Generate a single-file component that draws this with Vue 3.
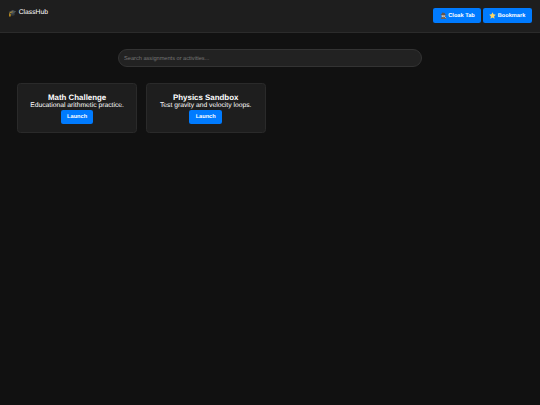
<template>
  <div class="hub">
    <header class="hub__header">
      <div class="hub__brand">
        <svg class="hub__brand-icon" viewBox="0 0 16 16" aria-hidden="true">
          <path d="M4 7v5c2 2 7 2 9 0V7z" fill="#343b3e" />
          <path d="M1 6 9 2l7 3-7 5z" fill="#4b5357" />
          <path d="M9 5.5 3 7.5V14" fill="none" stroke="#c79a28" stroke-width="1.5" />
          <path d="M2 10h3v5H1.5z" fill="#b88a20" />
        </svg>
        <span>ClassHub</span>
      </div>
      <div class="hub__actions">
        <button class="btn" type="button">
          <svg class="btn__icon" viewBox="0 0 16 16" aria-hidden="true">
            <path d="M2 16c0-4 3-5 6-5s6 1 6 5z" fill="#68615c" />
            <circle cx="8" cy="8" r="4" fill="#e5b58b" />
            <path d="M1 6c2-1 3-1 4-5l6 1c0 3 2 4 4 5-4 1-10 1-14-1z" fill="#65554c" />
            <path d="m10 10 4 4" stroke="#d8d2c7" stroke-width="1.5" />
            <circle cx="6" cy="9.5" r="2.2" fill="#d5e3e8" stroke="#77706b" />
          </svg>
          <span>Cloak Tab</span>
        </button>
        <button class="btn" type="button">
          <svg class="btn__icon" viewBox="0 0 16 16" aria-hidden="true">
            <path d="m8 .5 2.3 4.9 5.3.7-3.9 3.7 1 5.4L8 12.6l-4.7 2.6 1-5.4L.4 6.1l5.3-.7z" fill="#fdd663" />
          </svg>
          <span>Bookmark</span>
        </button>
      </div>
    </header>

    <input
      v-model="query"
      class="hub__search"
      type="text"
      placeholder="Search assignments or activities..."
    />

    <main class="hub__grid">
      <article v-for="item in filteredItems" :key="item.title" class="card">
        <h3 class="card__title">{{ item.title }}</h3>
        <p class="card__text">{{ item.text }}</p>
        <button class="btn" type="button">Launch</button>
      </article>
    </main>
  </div>
</template>

<script setup>
import { computed, ref } from 'vue'

const query = ref('')

const items = [
  { title: 'Math Challenge', text: 'Educational arithmetic practice.' },
  { title: 'Physics Sandbox', text: 'Test gravity and velocity loops.' },
]

const filteredItems = computed(() =>
  items.filter((item) => item.title.toLowerCase().includes(query.value.toLowerCase())),
)
</script>

<style>
body {
  margin: 0;
  background: #111;
}
</style>

<style scoped>
.hub {
  min-height: 100vh;
  background: #111;
  color: #fff;
  font-family: 'Liberation Sans', Arial, sans-serif;
  font-size: 6.75px;
  line-height: 8px;
  text-rendering: geometricPrecision;
}

.hub__header {
  box-sizing: border-box;
  height: 33px;
  display: flex;
  justify-content: space-between;
  align-items: flex-start;
  padding: 8.4px 8.4px 0;
  border-bottom: 1px solid #2b2b2b;
  background: #1e1e1e;
}

.hub__brand {
  display: flex;
  align-items: center;
  gap: 1.9px;
  padding-top: 0.6px;
}

.hub__brand-icon {
  width: 8.4px;
  height: 8px;
}

.hub__actions {
  display: flex;
  gap: 1.9px;
}

.btn {
  height: 14.8px;
  display: inline-flex;
  align-items: center;
  justify-content: center;
  gap: 1.6px;
  padding: 0 6.3px;
  border: none;
  border-radius: 2.1px;
  background: #007bff;
  color: #fff;
  font-family: inherit;
  font-size: 5.63px;
  font-weight: bold;
  line-height: 6.4px;
  text-rendering: inherit;
  cursor: pointer;
}

.btn__icon {
  width: 7px;
  height: 7px;
}

.hub__search {
  box-sizing: border-box;
  display: block;
  width: 304px;
  height: 18px;
  margin: 16px auto;
  padding: 1px 5px 0;
  border: 1px solid #333;
  border-radius: 9px;
  outline: none;
  background: #222;
  color: #fff;
  font-family: inherit;
  font-size: 5.63px;
  text-rendering: inherit;
}

.hub__search::placeholder {
  color: #757575;
}

.hub__grid {
  display: grid;
  grid-template-columns: repeat(4, 1fr);
  gap: 8.4px;
  padding: 0 17px;
}

.card {
  box-sizing: border-box;
  height: 50px;
  padding: 9px 7.4px 0;
  border: 1px solid #2a2a2a;
  border-radius: 3.4px;
  background: #1e1e1e;
  text-align: center;
}

.card__title {
  margin: 0;
  font-size: 7.9px;
  line-height: 9px;
}

.card__text {
  margin: 0;
  line-height: 7.6px;
  white-space: nowrap;
}

.card .btn {
  vertical-align: top;
}
</style>
